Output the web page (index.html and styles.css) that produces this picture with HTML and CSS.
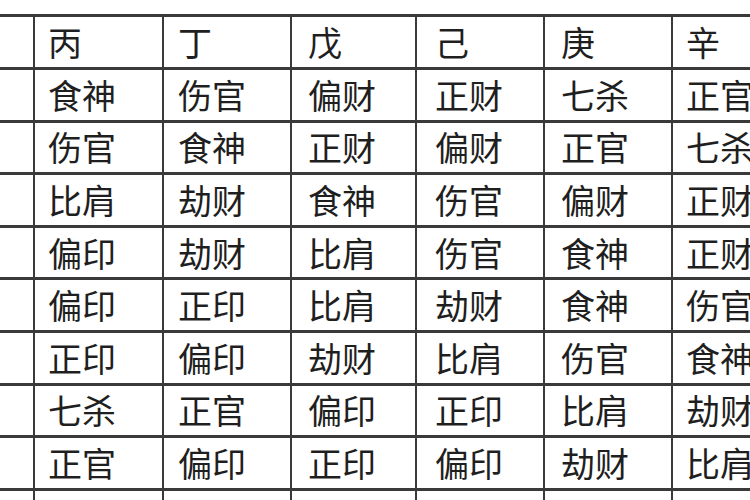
FILE: index.html
```html
<!DOCTYPE html>
<html lang="zh-CN">
<head>
<meta charset="utf-8">
<title>十神表</title>
<link rel="stylesheet" href="styles.css">
</head>
<body>
<div class="sheet">
  <div class="cell"></div><div class="cell">丙</div><div class="cell">丁</div><div class="cell">戊</div><div class="cell">己</div><div class="cell">庚</div><div class="cell">辛</div>
  <div class="cell"></div><div class="cell">食神</div><div class="cell">伤官</div><div class="cell">偏财</div><div class="cell">正财</div><div class="cell">七杀</div><div class="cell">正官</div>
  <div class="cell"></div><div class="cell">伤官</div><div class="cell">食神</div><div class="cell">正财</div><div class="cell">偏财</div><div class="cell">正官</div><div class="cell">七杀</div>
  <div class="cell"></div><div class="cell">比肩</div><div class="cell">劫财</div><div class="cell">食神</div><div class="cell">伤官</div><div class="cell">偏财</div><div class="cell">正财</div>
  <div class="cell"></div><div class="cell">偏印</div><div class="cell">劫财</div><div class="cell">比肩</div><div class="cell">伤官</div><div class="cell">食神</div><div class="cell">正财</div>
  <div class="cell"></div><div class="cell">偏印</div><div class="cell">正印</div><div class="cell">比肩</div><div class="cell">劫财</div><div class="cell">食神</div><div class="cell">伤官</div>
  <div class="cell"></div><div class="cell">正印</div><div class="cell">偏印</div><div class="cell">劫财</div><div class="cell">比肩</div><div class="cell">伤官</div><div class="cell">食神</div>
  <div class="cell"></div><div class="cell">七杀</div><div class="cell">正官</div><div class="cell">偏印</div><div class="cell">正印</div><div class="cell">比肩</div><div class="cell">劫财</div>
  <div class="cell"></div><div class="cell">正官</div><div class="cell">偏印</div><div class="cell">正印</div><div class="cell">偏印</div><div class="cell">劫财</div><div class="cell">比肩</div>
  <div class="cell"></div><div class="cell"></div><div class="cell"></div><div class="cell"></div><div class="cell"></div><div class="cell"></div><div class="cell"></div>
</div>
</body>
</html>
```
FILE: styles.css
```css
html, body {
  margin: 0;
  padding: 0;
  background: #ffffff;
  overflow: hidden;
  width: 750px;
  height: 500px;
}

.sheet {
  margin-top: 14px;
  width: max-content;
  display: grid;
  grid-template-columns: 33px 127px 126px 123px 126px 126px 130px;
  grid-template-rows: 50px repeat(9, 49.6px);
  column-gap: 2px;
  row-gap: 3px;
  background: #3a3a3a;
  border-top: 3px solid #3a3a3a;
  font-family: "Noto Sans CJK SC", "Noto Sans", sans-serif;
  font-size: 34px;
  color: #1f1f1f;
}

.cell {
  background: #ffffff;
  display: flex;
  align-items: center;
  line-height: 1;
  white-space: nowrap;
  overflow: hidden;
  padding-left: 14px;
}

.cell:nth-child(7n+2) { padding-left: 13px; }
.cell:nth-child(7n+3) { padding-left: 14px; }
.cell:nth-child(7n+4) { padding-left: 16px; }
.cell:nth-child(7n+5) { padding-left: 18px; }
.cell:nth-child(7n+6) { padding-left: 16px; }
.cell:nth-child(7n) { padding-left: 13px; }
```
